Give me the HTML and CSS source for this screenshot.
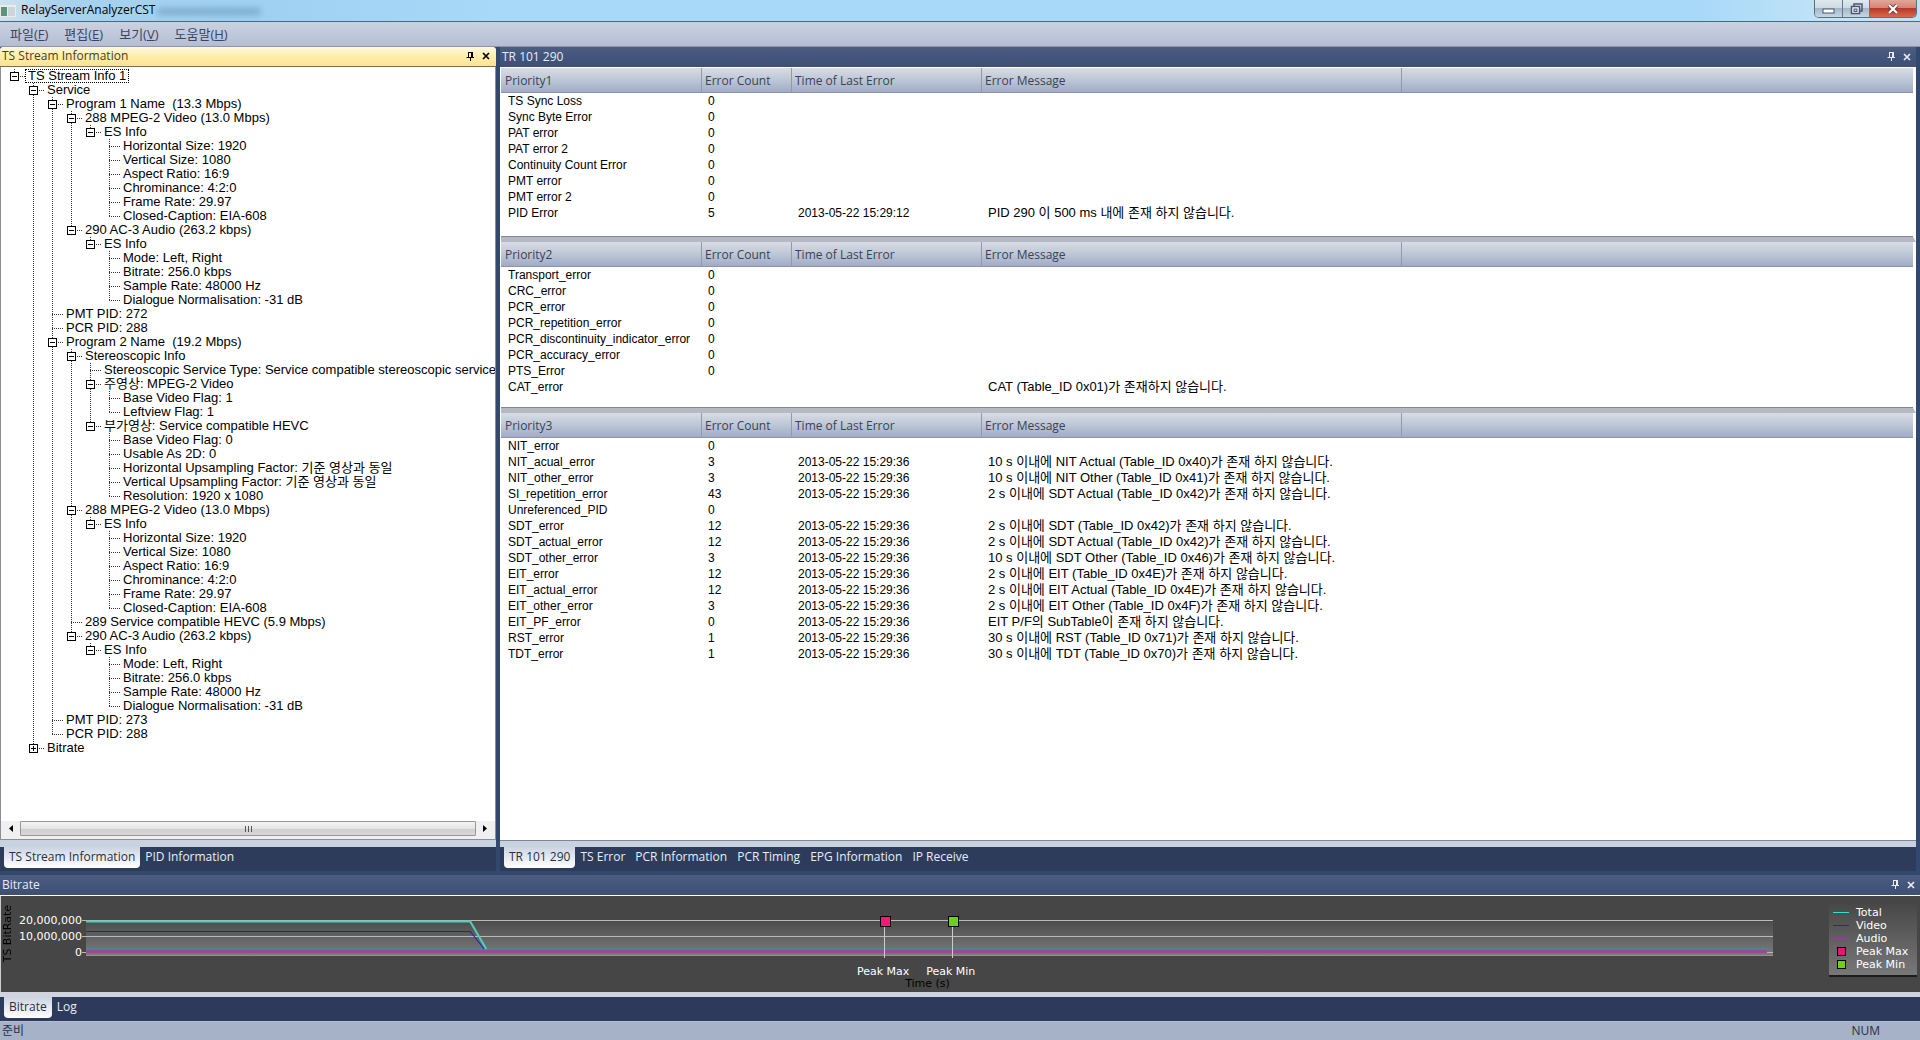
FILE: index.html
```html
<!DOCTYPE html>
<html lang="ko">
<head>
<meta charset="utf-8">
<title>RelayServerAnalyzerCST</title>
<link rel="stylesheet" href="styles.css">
</head>
<body>
<svg class="defs" aria-hidden="true">
  <symbol id="pin" viewBox="0 0 9 9"><path d="M2.5 0.5V5M2 0.5H6M5.500 0V5.500M6.500 0V5.500M0.500 5.500H8M4.500 6V9" fill="none" stroke="currentColor"/></symbol>
  <symbol id="cross" viewBox="0 0 8 8"><path d="M1 1L7 7M7 1L1 7" fill="none" stroke="currentColor" stroke-width="1.700"/></symbol>
</svg>
<div class="app">
  <header class="titlebar">
    <svg class="app-icon" viewBox="0 0 16 12"><rect width="16" height="12" fill="#e8ecea"/><rect x="1" y="2" width="6" height="9" fill="#5c9478"/><rect x="8" y="2" width="7" height="9" fill="#cdd5d8"/></svg>
    <h1 class="title">RelayServerAnalyzerCST</h1>
    <span class="title-ghost"></span>
    <div class="window-buttons">
      <button class="win min" aria-label="Minimize"><svg viewBox="0 0 13 6"><rect x="1" y="1" width="11" height="4" fill="#fff" stroke="#4d5575"/></svg></button>
      <button class="win restore" aria-label="Restore"><svg viewBox="0 0 13 12"><path d="M4 3V1H12V8H10" fill="none" stroke="#4d5575" stroke-width="1.500"/><rect x="1.500" y="3.500" width="8" height="7" fill="#fff" stroke="#4d5575" stroke-width="1.500"/><rect x="4" y="6" width="3" height="2.500" fill="#c8d3e0" stroke="#4d5575"/></svg></button>
      <button class="win close" aria-label="Close"><svg viewBox="0 0 12 10"><path d="M2 1L10 9M10 1L2 9" stroke="#6a3a45" stroke-width="4"/><path d="M2 1L10 9M10 1L2 9" stroke="#fff" stroke-width="2.200"/></svg></button>
    </div>
  </header>
  <nav class="menubar">
    <button>파일(<u>F</u>)</button><button>편집(<u>E</u>)</button><button>보기(<u>V</u>)</button><button>도움말(<u>H</u>)</button>
  </nav>

  <main class="workspace">
    <section class="dock dock-left">
      <div class="caption caption-active">
        <h2>TS Stream Information</h2>
        <button class="cap-btn" aria-label="Pin"><svg class="pin"><use href="#pin"/></svg></button>
        <button class="cap-btn" aria-label="Close"><svg class="cross"><use href="#cross"/></svg></button>
      </div>
      <div class="tree-pane">
        <ul class="tree">
          <li><div class="node"><button class="toggle" aria-label="Collapse"></button><span class="label focused">TS Stream Info 1</span></div>
            <ul>
              <li><div class="node"><button class="toggle" aria-label="Collapse"></button><span class="label">Service</span></div>
                <ul>
                  <li><div class="node"><button class="toggle" aria-label="Collapse"></button><span class="label">Program 1 Name &nbsp;(13.3 Mbps)</span></div>
                    <ul>
                      <li><div class="node"><button class="toggle" aria-label="Collapse"></button><span class="label">288 MPEG-2 Video (13.0 Mbps)</span></div>
                        <ul>
                          <li><div class="node"><button class="toggle" aria-label="Collapse"></button><span class="label">ES Info</span></div>
                            <ul>
                              <li class="leaf">Horizontal Size: 1920</li>
                              <li class="leaf">Vertical Size: 1080</li>
                              <li class="leaf">Aspect Ratio: 16:9</li>
                              <li class="leaf">Chrominance: 4:2:0</li>
                              <li class="leaf">Frame Rate: 29.97</li>
                              <li class="leaf">Closed-Caption: EIA-608</li>
                            </ul></li>
                        </ul></li>
                      <li><div class="node"><button class="toggle" aria-label="Collapse"></button><span class="label">290 AC-3 Audio (263.2 kbps)</span></div>
                        <ul>
                          <li><div class="node"><button class="toggle" aria-label="Collapse"></button><span class="label">ES Info</span></div>
                            <ul>
                              <li class="leaf">Mode: Left, Right</li>
                              <li class="leaf">Bitrate: 256.0 kbps</li>
                              <li class="leaf">Sample Rate: 48000 Hz</li>
                              <li class="leaf">Dialogue Normalisation: -31 dB</li>
                            </ul></li>
                        </ul></li>
                    </ul></li>
                  <li class="leaf">PMT PID: 272</li>
                  <li class="leaf">PCR PID: 288</li>
                  <li><div class="node"><button class="toggle" aria-label="Collapse"></button><span class="label">Program 2 Name &nbsp;(19.2 Mbps)</span></div>
                    <ul>
                      <li><div class="node"><button class="toggle" aria-label="Collapse"></button><span class="label">Stereoscopic Info</span></div>
                        <ul>
                          <li class="leaf">Stereoscopic Service Type: Service compatible stereoscopic service</li>
                          <li><div class="node"><button class="toggle" aria-label="Collapse"></button><span class="label">주영상: MPEG-2 Video</span></div>
                            <ul>
                              <li class="leaf">Base Video Flag: 1</li>
                              <li class="leaf">Leftview Flag: 1</li>
                            </ul></li>
                          <li><div class="node"><button class="toggle" aria-label="Collapse"></button><span class="label">부가영상: Service compatible HEVC</span></div>
                            <ul>
                              <li class="leaf">Base Video Flag: 0</li>
                              <li class="leaf">Usable As 2D: 0</li>
                              <li class="leaf">Horizontal Upsampling Factor: 기준 영상과 동일</li>
                              <li class="leaf">Vertical Upsampling Factor: 기준 영상과 동일</li>
                              <li class="leaf">Resolution: 1920 x 1080</li>
                            </ul></li>
                        </ul></li>
                      <li><div class="node"><button class="toggle" aria-label="Collapse"></button><span class="label">288 MPEG-2 Video (13.0 Mbps)</span></div>
                        <ul>
                          <li><div class="node"><button class="toggle" aria-label="Collapse"></button><span class="label">ES Info</span></div>
                            <ul>
                              <li class="leaf">Horizontal Size: 1920</li>
                              <li class="leaf">Vertical Size: 1080</li>
                              <li class="leaf">Aspect Ratio: 16:9</li>
                              <li class="leaf">Chrominance: 4:2:0</li>
                              <li class="leaf">Frame Rate: 29.97</li>
                              <li class="leaf">Closed-Caption: EIA-608</li>
                            </ul></li>
                        </ul></li>
                      <li class="leaf">289 Service compatible HEVC (5.9 Mbps)</li>
                      <li><div class="node"><button class="toggle" aria-label="Collapse"></button><span class="label">290 AC-3 Audio (263.2 kbps)</span></div>
                        <ul>
                          <li><div class="node"><button class="toggle" aria-label="Collapse"></button><span class="label">ES Info</span></div>
                            <ul>
                              <li class="leaf">Mode: Left, Right</li>
                              <li class="leaf">Bitrate: 256.0 kbps</li>
                              <li class="leaf">Sample Rate: 48000 Hz</li>
                              <li class="leaf">Dialogue Normalisation: -31 dB</li>
                            </ul></li>
                        </ul></li>
                    </ul></li>
                  <li class="leaf">PMT PID: 273</li>
                  <li class="leaf">PCR PID: 288</li>
                </ul></li>
              <li><div class="node"><button class="toggle plus" aria-label="Expand"></button><span class="label">Bitrate</span></div></li>
            </ul></li>
        </ul>
        <div class="hscroll">
          <button class="arrow" aria-label="Scroll left"><svg viewBox="0 0 4 7"><path d="M4 0V7L0 3.500Z"/></svg></button>
          <div class="thumb"><i></i><i></i><i></i></div>
          <button class="arrow" aria-label="Scroll right"><svg viewBox="0 0 4 7"><path d="M0 0V7L4 3.500Z"/></svg></button>
        </div>
      </div>
      <nav class="tabs">
        <button class="tab selected">TS Stream Information</button><button class="tab">PID Information</button>
      </nav>
    </section>

    <section class="dock dock-right">
      <div class="caption">
        <h2>TR 101 290</h2>
        <button class="cap-btn" aria-label="Pin"><svg class="pin"><use href="#pin"/></svg></button>
        <button class="cap-btn" aria-label="Close"><svg class="cross"><use href="#cross"/></svg></button>
      </div>
      <div class="lists">
        <div class="list p1">
          <table>
            <thead><tr><th class="c-name">Priority1</th><th class="c-count">Error Count</th><th class="c-time">Time of Last Error</th><th class="c-msg">Error Message</th><th></th></tr></thead>
            <tbody>
              <tr><td>TS Sync Loss</td><td>0</td><td></td><td></td><td></td></tr>
              <tr><td>Sync Byte Error</td><td>0</td><td></td><td></td><td></td></tr>
              <tr><td>PAT error</td><td>0</td><td></td><td></td><td></td></tr>
              <tr><td>PAT error 2</td><td>0</td><td></td><td></td><td></td></tr>
              <tr><td>Continuity Count Error</td><td>0</td><td></td><td></td><td></td></tr>
              <tr><td>PMT error</td><td>0</td><td></td><td></td><td></td></tr>
              <tr><td>PMT error 2</td><td>0</td><td></td><td></td><td></td></tr>
              <tr><td>PID Error</td><td>5</td><td>2013-05-22 15:29:12</td><td>PID 290 이 500 ms 내에 존재 하지 않습니다.</td><td></td></tr>
            </tbody>
          </table>
        </div>
        <div class="list p2">
          <table>
            <thead><tr><th class="c-name">Priority2</th><th class="c-count">Error Count</th><th class="c-time">Time of Last Error</th><th class="c-msg">Error Message</th><th></th></tr></thead>
            <tbody>
              <tr><td>Transport_error</td><td>0</td><td></td><td></td><td></td></tr>
              <tr><td>CRC_error</td><td>0</td><td></td><td></td><td></td></tr>
              <tr><td>PCR_error</td><td>0</td><td></td><td></td><td></td></tr>
              <tr><td>PCR_repetition_error</td><td>0</td><td></td><td></td><td></td></tr>
              <tr><td>PCR_discontinuity_indicator_error</td><td>0</td><td></td><td></td><td></td></tr>
              <tr><td>PCR_accuracy_error</td><td>0</td><td></td><td></td><td></td></tr>
              <tr><td>PTS_Error</td><td>0</td><td></td><td></td><td></td></tr>
              <tr><td>CAT_error</td><td></td><td></td><td>CAT (Table_ID 0x01)가 존재하지 않습니다.</td><td></td></tr>
            </tbody>
          </table>
        </div>
        <div class="list p3">
          <table>
            <thead><tr><th class="c-name">Priority3</th><th class="c-count">Error Count</th><th class="c-time">Time of Last Error</th><th class="c-msg">Error Message</th><th></th></tr></thead>
            <tbody>
              <tr><td>NIT_error</td><td>0</td><td></td><td></td><td></td></tr>
              <tr><td>NIT_acual_error</td><td>3</td><td>2013-05-22 15:29:36</td><td>10 s 이내에 NIT Actual (Table_ID 0x40)가 존재 하지 않습니다.</td><td></td></tr>
              <tr><td>NIT_other_error</td><td>3</td><td>2013-05-22 15:29:36</td><td>10 s 이내에 NIT Other (Table_ID 0x41)가 존재 하지 않습니다.</td><td></td></tr>
              <tr><td>SI_repetition_error</td><td>43</td><td>2013-05-22 15:29:36</td><td>2 s 이내에 SDT Actual (Table_ID 0x42)가 존재 하지 않습니다.</td><td></td></tr>
              <tr><td>Unreferenced_PID</td><td>0</td><td></td><td></td><td></td></tr>
              <tr><td>SDT_error</td><td>12</td><td>2013-05-22 15:29:36</td><td>2 s 이내에 SDT (Table_ID 0x42)가 존재 하지 않습니다.</td><td></td></tr>
              <tr><td>SDT_actual_error</td><td>12</td><td>2013-05-22 15:29:36</td><td>2 s 이내에 SDT Actual (Table_ID 0x42)가 존재 하지 않습니다.</td><td></td></tr>
              <tr><td>SDT_other_error</td><td>3</td><td>2013-05-22 15:29:36</td><td>10 s 이내에 SDT Other (Table_ID 0x46)가 존재 하지 않습니다.</td><td></td></tr>
              <tr><td>EIT_error</td><td>12</td><td>2013-05-22 15:29:36</td><td>2 s 이내에 EIT (Table_ID 0x4E)가 존재 하지 않습니다.</td><td></td></tr>
              <tr><td>EIT_actual_error</td><td>12</td><td>2013-05-22 15:29:36</td><td>2 s 이내에 EIT Actual (Table_ID 0x4E)가 존재 하지 않습니다.</td><td></td></tr>
              <tr><td>EIT_other_error</td><td>3</td><td>2013-05-22 15:29:36</td><td>2 s 이내에 EIT Other (Table_ID 0x4F)가 존재 하지 않습니다.</td><td></td></tr>
              <tr><td>EIT_PF_error</td><td>0</td><td>2013-05-22 15:29:36</td><td>EIT P/F의 SubTable이 존재 하지 않습니다.</td><td></td></tr>
              <tr><td>RST_error</td><td>1</td><td>2013-05-22 15:29:36</td><td>30 s 이내에 RST (Table_ID 0x71)가 존재 하지 않습니다.</td><td></td></tr>
              <tr><td>TDT_error</td><td>1</td><td>2013-05-22 15:29:36</td><td>30 s 이내에 TDT (Table_ID 0x70)가 존재 하지 않습니다.</td><td></td></tr>
            </tbody>
          </table>
        </div>
      </div>
      <nav class="tabs">
        <button class="tab selected">TR 101 290</button><button class="tab">TS Error</button><button class="tab">PCR Information</button><button class="tab">PCR Timing</button><button class="tab">EPG Information</button><button class="tab">IP Receive</button>
      </nav>
    </section>
  </main>

  <section class="dock dock-bottom">
    <div class="caption">
      <h2>Bitrate</h2>
      <button class="cap-btn" aria-label="Pin"><svg class="pin"><use href="#pin"/></svg></button>
      <button class="cap-btn" aria-label="Close"><svg class="cross"><use href="#cross"/></svg></button>
    </div>
    <div class="chart">
      <span class="y-title">TS BitRate</span>
      <div class="y-axis"><span>20,000,000</span><span>10,000,000</span><span>0</span></div>
      <div class="plot-col">
        <div class="plot">
          <svg viewBox="0 0 1690 36" preserveAspectRatio="none">
            <defs><linearGradient id="pg" x1="0" y1="0" x2="0" y2="1"><stop offset="0" stop-color="#4b4b4b"/><stop offset="1" stop-color="#7c7c7c"/></linearGradient></defs>
            <rect x="4" width="1686" height="36" fill="url(#pg)"/>
            <path d="M0 0.500H1690M0 16.500H1690M0 32.500H1690" stroke="#b9b9b9"/>
            <path d="M4 29H1684" stroke="#4f8190" stroke-width="2"/>
            <path d="M4 31.500H1684" stroke="#9a4a94" stroke-width="3"/>
            <path d="M4 35.500H1690" stroke="#a08a90"/>
            <path d="M4 11.500H388L402 29" fill="none" stroke="#2a1cb0"/>
            <path d="M4 1.500H388L404 29" fill="none" stroke="#4fd0b8" stroke-width="2"/>
          </svg>
          <i class="peak peak-max"></i><i class="peak peak-min"></i>
          <span class="peak-label at-max">Peak Max</span><span class="peak-label at-min">Peak Min</span>
        </div>
        <span class="x-title">Time (s)</span>
      </div>
      <ul class="legend">
        <li><i class="line total"></i>Total</li>
        <li><i class="line video"></i>Video</li>
        <li><i class="line audio"></i>Audio</li>
        <li><i class="box max"></i>Peak Max</li>
        <li><i class="box low"></i>Peak Min</li>
      </ul>
    </div>
    <nav class="tabs">
      <button class="tab selected">Bitrate</button><button class="tab">Log</button>
    </nav>
  </section>

  <footer class="statusbar"><span>준비</span><span class="num">NUM</span></footer>
</div>
</body>
</html>
```

FILE: styles.css
```css
:root {
  --ui: "Open Sans", "Noto Sans CJK KR", sans-serif;
  --list: "Liberation Sans", "Noto Sans CJK KR", sans-serif;
  --navy: #2c3c5a;
}
* { box-sizing: border-box; }
body { margin: 0; font: 12px/14px var(--ui); color: #000; }
button { margin: 0; padding: 0; border: 0; background: none; font: inherit; color: inherit; display: flex; align-items: center; justify-content: center; }
h1, h2 { margin: 0; font: inherit; }
ul { margin: 0; padding: 0; list-style: none; }
svg { display: block; }
.defs { position: absolute; width: 0; height: 0; }
.app { display: flex; flex-direction: column; min-height: 100vh; background: #33486e; }

.titlebar { display: flex; align-items: flex-start; height: 22px; border-bottom: 1px solid #456a85; background: linear-gradient(90deg, #cfe2ee 0, #a8d2ec 60px, #9fd0f2 250px, #a8d9f8 500px, #a8d9f8 1700px, #c4e4f6 1840px, #bfe3f2 100%); }
.app-icon { width: 16px; height: 12px; margin: 5px 5px 0 0; }
.title { line-height: 20px; }
.title-ghost { width: 104px; height: 7px; margin: 8px 0 0 2px; border-radius: 4px; background: #4f7f9f; opacity: .45; filter: blur(3px); }
.window-buttons { display: flex; height: 18px; margin: 0 3px 0 auto; border: 1px solid #5a6f80; border-top: 0; border-radius: 0 0 5px 5px; overflow: hidden; }
.win { width: 27px; background: linear-gradient(#dfe9ee 0, #cddbe4 45%, #a3b7c6 50%, #c4d8e4 100%); }
.win + .win { border-left: 1px solid #66788a; }
.win.min { align-items: flex-end; padding-bottom: 3px; }
.min svg { width: 13px; height: 6px; }
.restore svg { width: 13px; height: 12px; }
.win.close { width: 47px; background: linear-gradient(#e2a69a 0, #d68475 45%, #b8382a 50%, #d9694c 100%); }
.close svg { width: 12px; height: 10px; }

.menubar { display: flex; gap: 16px; height: 25px; padding-left: 10px; font-size: 13px; background: linear-gradient(#cad1de, #c0c8dc 50%, #b4bdd1); border-bottom: 1px solid #8d95a8; color: #3c4464; }

.workspace { display: flex; flex: 1; gap: 4px; padding-right: 4px; }
.dock { display: flex; flex-direction: column; min-width: 0; }
.dock-left { width: 496px; flex: none; }
.dock-right { flex: 1; }
.caption { display: flex; align-items: center; gap: 7px; height: 20px; padding: 0 5px 1px 2px; color: #e6ebf5; background: linear-gradient(#4c5d80, #43557c 50%, #3e4f72); }
.caption h2 { margin-right: auto; line-height: 18px; }
.caption-active { padding-right: 6px; color: #4a4020; background: linear-gradient(#fff9e0, #ffedaa 50%, #fde494); border-bottom: 1px solid #776f55; border-radius: 3px 3px 0 0; }
.caption-active .cap-btn { color: #000; }
.pin { width: 9px; height: 9px; }
.cross { width: 8px; height: 8px; }

.tree-pane { display: flex; flex-direction: column; flex: 1; background: #fff; border: 1px solid #8a8f98; border-top: 0; padding-top: 2px; font-family: var(--list); overflow: hidden; }
.tree { flex: 1; padding-left: 9px; font-size: 13px; white-space: nowrap; overflow: hidden; }
.tree ul { padding-left: 19px; }
.tree li {
  --dots-v: repeating-linear-gradient(to bottom, #333 0 1px, transparent 1px 2px);
  --dots-h: repeating-linear-gradient(to right, #333 0 1px, transparent 1px 2px);
  background: var(--dots-v) 4px 0 / 1px 100% no-repeat, var(--dots-h) 4px 7px / 11px 1px no-repeat;
}
.tree li:last-child { background-size: 1px 8px, 11px 1px; }
.node { display: flex; align-items: center; height: 14px; }
.toggle { width: 9px; height: 9px; margin-right: 6px; border: 1px solid #000; background: linear-gradient(#000, #000) center / 5px 1px no-repeat, #fff; }
.toggle.plus { background: linear-gradient(#000, #000) center / 5px 1px no-repeat, linear-gradient(#000, #000) center / 1px 5px no-repeat, #fff; }
.label { height: 14px; padding: 0 3px; line-height: 14px; }
.focused { outline: 1px dotted #000; outline-offset: -1px; }
.leaf { height: 14px; padding-left: 18px; line-height: 14px; }

.hscroll { display: flex; height: 18px; padding: 0 1px 3px; background: #f0f0f0; }
.arrow { width: 18px; }
.arrow svg { width: 4px; height: 7px; }
.thumb { display: flex; flex: 1; align-items: center; justify-content: center; gap: 2px; border: 1px solid #979797; border-radius: 1px; background: linear-gradient(#f4f4f4, #e4e4e4 50%, #cfcfcf 55%, #d8d8d8); }
.thumb i { width: 1px; height: 6px; background: #555; }

.tabs { display: flex; height: 35px; padding: 7px 0 6px 4px; color: #e8edf6; background: linear-gradient(#c9d3e0 0 7px, var(--navy) 7px 31px, #34486d 31px); }
.dock-right .tabs { height: 34px; padding-top: 6px; background: linear-gradient(#c9d3e0 0 6px, var(--navy) 6px 30px, #34486d 30px); }
.tab { height: 21px; padding: 0 5px 1px; white-space: nowrap; }
.tab.selected { color: #26303f; background: linear-gradient(#ccd4e2, #fff); border-radius: 0 0 4px 4px; }

.lists { flex: 1; padding: 1px 0 0 1px; background: #fff; border-bottom: 1px solid #7d8798; }
.list { background: #fff; border-right: 3px solid #fff; }
.p1 { min-height: 174px; border-bottom: 5px solid #b4b9c3; box-shadow: inset 0 -1px #7f8899; }
.p2 { min-height: 171px; border-bottom: 5px solid #b4b9c3; box-shadow: inset 0 -1px #7f8899; }
table { width: 100%; border-collapse: separate; border-spacing: 0; table-layout: fixed; font-family: var(--list); }
th { height: 25px; padding: 2px 3px 0; text-align: left; font: 12px/14px var(--ui); color: #3b4254; background: linear-gradient(#d9dce4, #bcc7d6 50%, #a2abc6); border-bottom: 1px solid #8c95a8; }
th:not(:last-child) { border-right: 1px solid #8f9aad; box-shadow: 1px 0 #dde4ee; }
th:first-child { padding-left: 4px; }
.c-name { width: 201px; } .c-count { width: 90px; } .c-time { width: 190px; } .c-msg { width: 420px; }
td { height: 16px; padding: 0 6px; line-height: 16px; white-space: nowrap; }
td:first-child { padding-left: 7px; }
td:nth-child(4) { font-size: 13px; line-height: 15px; padding-bottom: 1px; }

.dock-bottom .caption { border-bottom: 1px solid #fff; height: 21px; }
.chart { display: flex; align-items: flex-start; height: 96px; border-left: 1px solid #ccc; background: #464646; color: #fff; font: 11px/14px "DejaVu Sans", sans-serif; }
.y-title { width: 14px; margin-top: 9px; writing-mode: vertical-rl; transform: rotate(180deg); color: #000; line-height: 14px; }
.y-axis { display: flex; flex-direction: column; gap: 2px; width: 67px; margin-top: 18px; text-align: right; }
.plot-col { flex: 1; padding-top: 24px; text-align: center; }
.plot { position: relative; height: 58px; }
.plot svg { width: 100%; height: 36px; }
.peak { position: absolute; top: -4px; width: 9px; height: 44px; background: linear-gradient(#ccc, #ccc) 4px 8px / 1px 34px no-repeat; }
.peak::before { content: ""; display: block; width: 9px; height: 9px; border: 1px solid #000; }
.peak-max::before { background: #f01a78; }
.peak-min::before { background: #6cd01c; }
.peak-label { position: absolute; top: 45px; width: 66px; margin-left: -30px; white-space: nowrap; }
.peak-max, .at-max { left: 47.2%; }
.peak-min, .at-min { left: 51.2%; }
.x-title { display: block; color: #000; line-height: 12px; }
.legend { width: 88px; margin: 7px 3px 0 56px; padding: 3px 0 4px 4px; background: linear-gradient(#474747, #787878); border-bottom: 2px solid #1c1c1c; }
.legend li { display: flex; align-items: center; gap: 7px; height: 13px; line-height: 13px; white-space: nowrap; }
.legend i { flex: none; }
.line { width: 16px; height: 1px; }
.total { background: #2fe0d8; } .video { background: #2a1cc8; } .audio { background: #a03a90; }
.box { width: 9px; height: 9px; margin: 0 3px 0 4px; border: 1px solid #000; }
.box.max { background: #d81a78; } .box.low { background: #6cd01c; }
.dock-bottom .tabs { height: 29px; padding: 5px 0 2px 4px; background: linear-gradient(#cfd4df 0 5px, #2d3a5b 5px); }
.statusbar { display: flex; justify-content: space-between; height: 19px; padding: 0 40px 0 2px; line-height: 18px; background: #a5b2c8; border-top: 1px solid #b4bed2; color: #27304a; overflow: hidden; }
```
